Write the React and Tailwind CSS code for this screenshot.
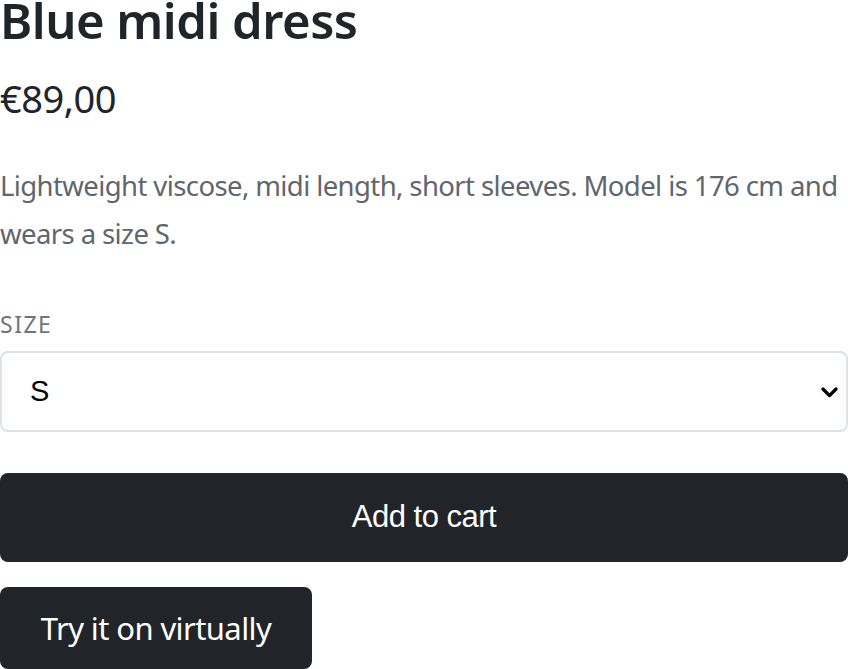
import React from "react";

const ChevronDown = () => (
  <svg
    viewBox="0 0 16 16"
    className="w-[19px] h-[19px]"
    fill="none"
    stroke="#000"
    strokeWidth="2.8"
    strokeLinecap="round"
    strokeLinejoin="round"
  >
    <path d="M2.5 5.5 8 11l5.5-5.5" />
  </svg>
);

export default function App() {
  return (
    <div className="w-[848px] bg-white text-[#212529] font-['Segoe_UI','Noto_Sans',sans-serif]">
      {/* Title & price */}
      <h1 className="text-[49px] font-semibold leading-[41px] tracking-[-0.5px]">
        Blue midi dress
      </h1>
      <div className="text-[38px] leading-none mt-[38px] tracking-[-0.5px]">€89,00</div>

      {/* Description */}
      <p className="mt-[45px] text-[27.5px] leading-[48px] text-[#5f666d] tracking-[-0.6px]">
        Lightweight viscose, midi length, short sleeves. Model is 176 cm and wears a size S.
      </p>

      {/* Size select */}
      <label className="block mt-[55px] text-[23px] leading-none tracking-[1.5px] text-[#6c757d]">
        SIZE
      </label>
      <div className="relative mt-[15px]">
        <select
          defaultValue="S"
          className="w-full h-[81px] appearance-none rounded-[8px] border-2 border-[#dee2e6] bg-white pl-[28px] pr-[60px] text-[29px] text-black font-['Liberation_Sans',Arial,sans-serif] outline-none"
        >
          <option>XS</option>
          <option>S</option>
          <option>M</option>
          <option>L</option>
        </select>
        <span className="pointer-events-none absolute right-[9px] top-1/2 -translate-y-1/2">
          <ChevronDown />
        </span>
      </div>

      {/* Actions */}
      <button className="mt-[41px] w-full h-[89px] rounded-[8px] bg-[#212529] text-white text-[31px] font-['Liberation_Sans',Arial,sans-serif] tracking-[-0.5px]">
        Add to cart
      </button>
      <div className="mt-[25px]">
        <button className="h-[82px] w-[312px] rounded-[8px] bg-[#212529] text-white text-[31px] tracking-[-0.6px]">
          Try it on virtually
        </button>
      </div>
    </div>
  );
}
